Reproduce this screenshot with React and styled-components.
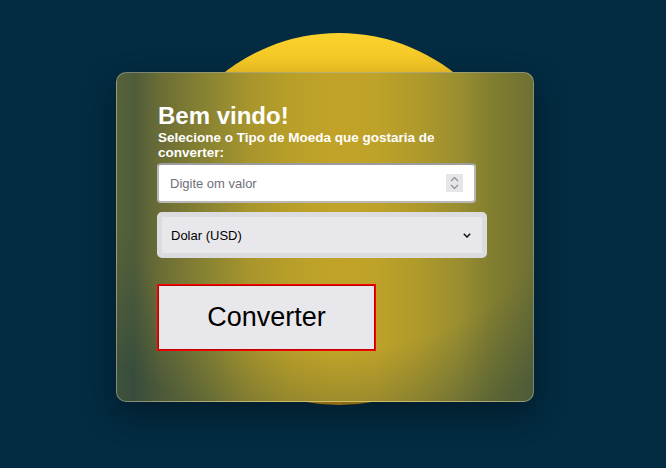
import React, { useState } from "react";
import styled, { createGlobalStyle } from "styled-components";

const GlobalStyle = createGlobalStyle`
  html, body {
    margin: 0;
    padding: 0;
    background: #032b41;
    font-family: "Liberation Sans", Arial, sans-serif;
  }
`;

// 화면 전체
const Page = styled.div`
  width: 666px;
  height: 468px;
  overflow: hidden;
  padding: 72px 0 0 116px;
  box-sizing: border-box;
  position: relative;
  background: #032b41;
`;

// 뒤쪽 노란 원
const Sun = styled.div`
  position: absolute;
  left: 153px;
  top: 33px;
  width: 372px;
  height: 372px;
  border-radius: 50%;
  background: linear-gradient(to bottom, #fcd22c 0%, #f0c224 12%, #d9a81e 80%, #c2901a 100%);
`;

// 유리 카드 (뒤 원이 흐리게 비친 모습)
const Card = styled.div`
  position: relative;
  width: 418px;
  height: 330px;
  box-sizing: border-box;
  padding: 29px 40px;
  border: 1px solid rgba(255, 255, 255, 0.3);
  border-radius: 10px;
  background:
    radial-gradient(
      ellipse 80% 85% at 53% 25%,
      rgba(3, 43, 65, 0) 70%,
      rgba(3, 43, 65, 0.3) 100%
    ),
    linear-gradient(
      to right,
      #58623a 0%,
      #4e5c3a 4%,
      #6a6c36 10%,
      #8a8432 22%,
      #a8952c 32%,
      #b99f29 42%,
      #c1a328 52%,
      #bfa229 62%,
      #b09a2b 72%,
      #9a8e30 82%,
      #827e30 90%,
      #6e7034 100%
    );
  box-shadow: 0 12px 30px rgba(0, 0, 0, 0.35);
  display: flex;
  flex-direction: column;
`;

const Title = styled.h1`
  margin: 0 0 0 1px;
  font-size: 24px;
  font-weight: 700;
  color: #ffffff;
`;

const Subtitle = styled.p`
  margin: 0 0 0 1px;
  width: 300px;
  font-size: 13.5px;
  line-height: 15px;
  font-weight: 700;
  color: #ffffff;
`;

// 입력 박스
const InputBox = styled.div`
  margin-top: 3px;
  width: 319px;
  height: 40px;
  box-sizing: border-box;
  padding: 0 11px 0 11px;
  border: 2px solid #b8b8b8;
  border-top-color: #9c9c9c;
  border-radius: 4px;
  background: #ffffff;
  display: flex;
  align-items: center;
`;

const Input = styled.input`
  flex: 1;
  min-width: 0;
  border: 0;
  padding: 0;
  background: transparent;
  font-family: "Liberation Sans", Arial, sans-serif;
  font-size: 13px;
  color: #222;
  outline: none;
  &::placeholder {
    color: #6f6f7a;
  }
  &::-webkit-inner-spin-button,
  &::-webkit-outer-spin-button {
    -webkit-appearance: none;
    margin: 0;
  }
`;

// 숫자 스피너
const Spinner = styled.div`
  width: 17px;
  height: 18px;
  background: #e6e6ea;
  display: flex;
  align-items: center;
  justify-content: center;
`;

const Select = styled.select`
  margin-top: 9px;
  width: 330px;
  height: 46px;
  box-sizing: border-box;
  padding: 0 26px 0 9px;
  border: 5px solid #dcdce0;
  border-radius: 5px;
  appearance: none;
  -webkit-appearance: none;
  background-color: #e8e7ec;
  background-image: url("data:image/svg+xml;utf8,<svg xmlns='http://www.w3.org/2000/svg' width='8' height='5' viewBox='0 0 8 5'><path d='M0.8 0.8 L4 4 L7.2 0.8' fill='none' stroke='%23111' stroke-width='1.5'/></svg>");
  background-repeat: no-repeat;
  background-position: right 11px center;
  font-family: "Liberation Sans", Arial, sans-serif;
  font-size: 13px;
  color: #000;
  outline: none;
`;

const ConvertBtn = styled.button`
  margin-top: 26px;
  width: 219px;
  height: 67px;
  box-sizing: border-box;
  border: 1px solid #ff0000;
  box-shadow: inset 0 0 0 1px #c00000;
  background: #e8e7ec;
  font-family: "Liberation Sans", Arial, sans-serif;
  font-size: 27px;
  color: #000;
  cursor: pointer;
`;

function App() {
  const [valor, setValor] = useState("");
  const [moeda, setMoeda] = useState("USD");

  return (
    <Page>
      <GlobalStyle />
      <Sun />
      <Card>
        <Title>Bem vindo!</Title>
        <Subtitle>Selecione o Tipo de Moeda que gostaria de converter:</Subtitle>
        <InputBox>
          <Input
            type="number"
            placeholder="Digite om valor"
            value={valor}
            onChange={(e) => setValor(e.target.value)}
          />
          <Spinner>
            <svg width="9" height="14" viewBox="0 0 9 14">
              <path d="M1 5 L4.5 1.5 L8 5" fill="none" stroke="#8a8a90" strokeWidth="1.2" />
              <path d="M1 9 L4.5 12.5 L8 9" fill="none" stroke="#8a8a90" strokeWidth="1.2" />
            </svg>
          </Spinner>
        </InputBox>
        <Select value={moeda} onChange={(e) => setMoeda(e.target.value)}>
          <option value="USD">Dolar (USD)</option>
          <option value="EUR">Euro (EUR)</option>
          <option value="GBP">Libra (GBP)</option>
        </Select>
        <ConvertBtn>Converter</ConvertBtn>
      </Card>
    </Page>
  );
}

export default App;
